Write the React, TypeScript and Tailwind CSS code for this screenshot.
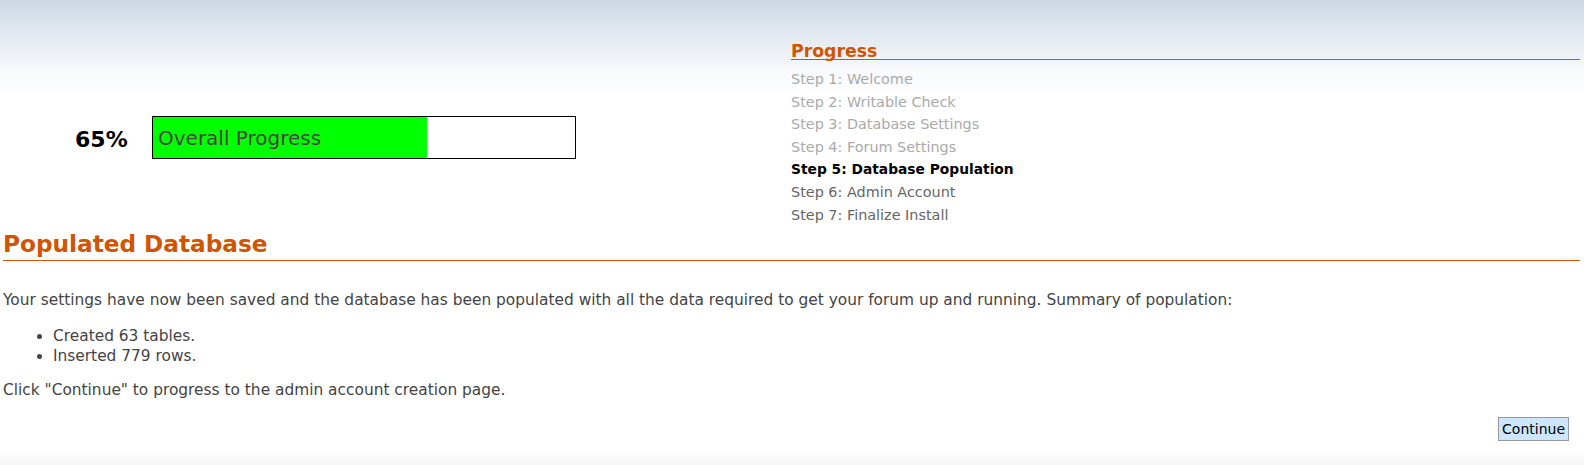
import React from 'react';

const steps = [
  { label: 'Step 1: Welcome', state: 'done' },
  { label: 'Step 2: Writable Check', state: 'done' },
  { label: 'Step 3: Database Settings', state: 'done' },
  { label: 'Step 4: Forum Settings', state: 'done' },
  { label: 'Step 5: Database Population', state: 'current' },
  { label: 'Step 6: Admin Account', state: 'todo' },
  { label: 'Step 7: Finalize Install', state: 'todo' },
];

const App = () => {
  const percent = 65;

  return (
    <div className="min-h-[465px] flex flex-col bg-[linear-gradient(to_bottom,#cdd8e5_0px,#f7f9fb_70px,#ffffff_95px)] font-['DejaVu_Sans',sans-serif] text-[15.4px] text-[#444]">
      <div className="flex">
        <div className="w-[791px] flex items-start pt-[116px] pl-[75px]">
          <div className="w-[77px] h-[43px] mt-[2px] flex items-center text-[22px] font-bold text-black">
            {percent}%
          </div>
          <div className="w-[424px] h-[43px] border border-black bg-white">
            <div
              className="h-full bg-[#00ff00] flex items-center pl-[5px] text-[20px] text-[#444] whitespace-nowrap"
              style={{ width: `${percent}%` }}
            >
              Overall Progress
            </div>
          </div>
        </div>
        <div className="flex-1 pt-[43px] pr-[4px]">
          <h3 className="text-[17.3px] font-bold text-[#d35400] border-b border-[#d35400] leading-[16px]">
            Progress
          </h3>
          <ul className="pt-[8px] text-[14.4px]">
            {steps.map((s) => (
              <li
                key={s.label}
                className={`h-[22.6px] leading-[22.6px] ${
                  s.state === 'done'
                    ? 'text-[#aaa]'
                    : s.state === 'current'
                      ? 'font-bold text-black text-[13.8px]'
                      : 'text-[#666]'
                }`}
              >
                {s.label}
              </li>
            ))}
          </ul>
        </div>
      </div>

      <div className="pl-[3px] pr-[4px]">
        <h2 className="mt-[1px] text-[23.2px] font-bold text-[#d35400] border-b border-[#d35400] leading-[33px]">
          Populated Database
        </h2>
        <p className="mt-[29px] leading-[20px]">
          Your settings have now been saved and the database has been populated with all the data
          required to get your forum up and running. Summary of population:
        </p>
        <ul className="list-disc pl-[50px] mt-[15.5px] leading-[20px]">
          <li>Created 63 tables.</li>
          <li>Inserted 779 rows.</li>
        </ul>
        <p className="mt-[14.5px] leading-[20px]">
          Click "Continue" to progress to the admin account creation page.
        </p>
        <div className="flex justify-end mt-[17px] pr-[11px]">
          <button className="h-[24px] bg-[#cce6ff] border border-[#999] px-[3px] text-black text-[14px] leading-[20px]">
            Continue
          </button>
        </div>
      </div>
      <div className="mt-auto h-[13px] bg-[linear-gradient(to_bottom,#fdfdfd,#f6f6f6)]" />
    </div>
  );
};

export default App;
